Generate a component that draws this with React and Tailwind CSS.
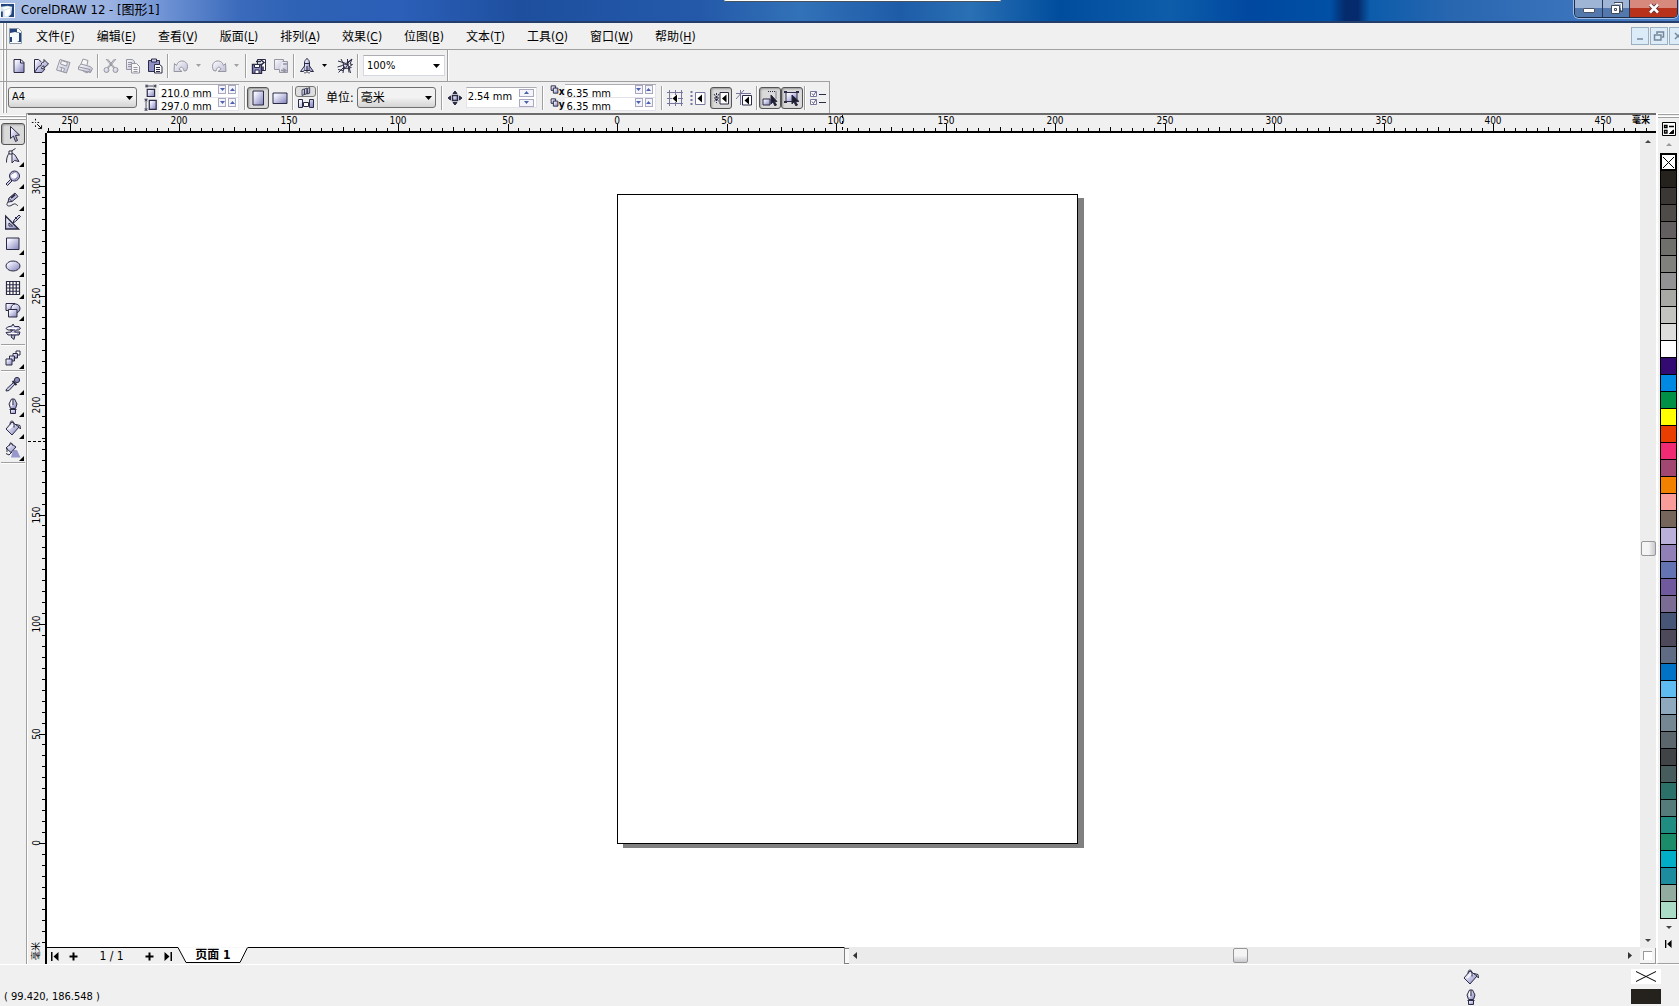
import React from "react";

const INK = "#2b2b45";
const LAV = "url(#lav)";

const MENUS = [
  ["文件", "F"], ["编辑", "E"], ["查看", "V"], ["版面", "L"], ["排列", "A"], ["效果", "C"],
  ["位图", "B"], ["文本", "T"], ["工具", "O"], ["窗口", "W"], ["帮助", "H"],
];

const PALETTE = [
  "#25221e", "#3a3734", "#4e4b48", "#635e5f", "#6f6f6c", "#80807d", "#929294", "#a8a8a5",
  "#c3c3c0", "#dddddb", "#ffffff", "#330a72", "#0089e2", "#009147", "#ffff00", "#ea3d00",
  "#f02b74", "#a14772", "#f28100", "#f99c9a", "#75655b", "#bbb0d9", "#9180b8", "#6474b3",
  "#71599d", "#7b6c93", "#475577", "#4d485a", "#5f6c83", "#0073c6", "#5fbcf1", "#8faabf",
  "#748793", "#5c666d", "#414446", "#465c5d", "#2b7169", "#567b7b", "#1f8d81", "#1b8c69",
  "#00aec7", "#1d8c9e", "#92ac9f", "#abdcc8",
];

/* ---------- icons, all on a 16 x 16 grid ---------- */
const SHAPES = {
  newDoc: <path d="M3 1.500h7l3 3v10H3zM9.500 1.500v3.500h3.500" fill={LAV} />,
  open: (
    <>
      <path d="M1.500 14.500v-13h4l3 2.500" fill={LAV} />
      <path d="M1.500 14.500l4-6 2.500-1c0-2 1-3.500 3-3.500V1.500l4.500 4.500-4.500 4V8c-2 0-2.500 1-2.500 2.500L12 11l-3 3.500z" fill={LAV} />
    </>
  ),
  save: (
    <>
      <path d="M5 1.500l10 3-3.500 10.500-10-3z" fill={LAV} />
      <path d="M6.500 2.500l6 2-1 3.500-6-2zM4.500 9l5 1.500-1 3.500M7 10l-1 3" fill="#fff" />
    </>
  ),
  print: (
    <>
      <path d="M4 6l2-5 5 1.500L10 7" fill="#fff" />
      <path d="M1.500 9L4 6l9 2.500 2.500 2-2 4-12-3z" fill={LAV} />
      <path d="M2 9l11 2.500M13 11.500v3M6 13l4 2 2-2" />
    </>
  ),
  cut: (
    <>
      <path d="M3 1l8 9.500M13 1L5 10.500M4.500 1l7.500 9M11.500 1L4 10" />
      <circle cx="3.500" cy="12" r="2.500" fill={LAV} />
      <circle cx="12.500" cy="12" r="2.500" fill={LAV} />
    </>
  ),
  copy: (
    <>
      <path d="M1.500 1.500h6l2 2v8h-8z" fill={LAV} />
      <path d="M6.500 5.500h5l3 3v6.500h-8zM8.500 9.500h4M8.500 11.500h4M8.500 13.500h4M3 4.500h4M3 6.500h3M3 8.500h3" fill="#fff" />
    </>
  ),
  paste: (
    <>
      <path d="M1.500 2.500h11v11h-11z" fill="#8f8fc6" />
      <path d="M4.500 1h5v3h-5z" fill="#ccccee" />
      <path d="M7.500 6.500h5l2.500 2V15H7.500zM9 9.500h4M9 11.500h4M9 13.500h4" fill="#fff" />
    </>
  ),
  undo: <path d="M1.500 5.500L1 13.500h8l-3-2.500c1-2.500 4-3 5 2l2.500-.5c3-6-1-10-5-9.500-3 .3-4 2-5 4.500z" fill={LAV} />,
  redo: <path d="M14.500 5.500l.5 8H7l3-2.500c-1-2.500-4-3-5 2l-2.500-.5c-3-6 1-10 5-9.500 3 .3 4 2 5 4.500z" fill={LAV} />,
  importIcon: (
    <>
      <path d="M6.500 1.500h8v11h-8z" fill="#fff" />
      <path d="M1.500 6.500h9v9h-9z" fill="#8f8fc6" strokeWidth="1.400" />
      <path d="M3.500 6.500h5v3h-5zM4 12h4v3.500H4z" fill="#fff" />
      <path d="M5 3.500h5M10 2l3 2.500-3 2.500M12 8.500v4" strokeWidth="1.600" />
    </>
  ),
  exportIcon: (
    <>
      <path d="M1.500 1.500h9v10h-9z" fill={LAV} />
      <path d="M9.500 3.500h5v11h-8v-3" fill={LAV} />
      <path d="M8 12.500h4M10 10.500l3 2-3 2M10 6h4" strokeWidth="1.500" />
    </>
  ),
  rocket: (
    <>
      <path d="M5.500 12.500V5c0-2 1-3.500 2.500-4.500C9.500 1.500 10.500 3 10.500 5v7.500z" fill={LAV} />
      <path d="M5.500 8L1.500 13.500h3l1-1.500M10.500 8l4 5.500h-3l-1-1.500M8 8v7M6 14v1.500M10 14v1.500" fill={LAV} />
      <path d="M6 5.500h4" />
    </>
  ),
  corel: (
    <>
      <path d="M1 3l5 1.500 3 1L15 1l-2 5 2.500.5L12 9l1.500 6M1.500 14.500L14 2M.5 9l5-1.500 4 3 5-1M4 1l3 6-1 8M1 11.500l5 1 5-7 1 9M10.500 1v4" />
      <path d="M6 6l5 .5L8 11z" fill={LAV} />
    </>
  ),
  pageW: (
    <>
      <path d="M4 6.500h9v9H4z" fill={LAV} strokeWidth="1.500" />
      <path d="M2 2.500h13M2.500 .5v4M14.500 .5v4M5 1L3 2.500 5 4M12 1l2 1.500L12 4" />
    </>
  ),
  pageH: (
    <>
      <path d="M6.500 3h8.500v11H6.500z" fill={LAV} strokeWidth="1.500" />
      <path d="M2.500 1v14M.5 1.500h4M.5 15h4M1 4l1.500-2L4 4M1 12.500l1.500 2 1.500-2" />
    </>
  ),
  portrait: <path d="M3 1h10.500v14H3z" fill={LAV} />,
  landscape: <path d="M1 3h14v10.500H1z" fill={LAV} />,
  facing: <path d="M1 5l4-1.500v10L1 15zM5.500 3.500l4-1.500v10l-4 1.500zM10.500 2.500l4-1.500v10l-4 1.500z" fill={LAV} strokeWidth="1.500" />,
  pages: (
    <>
      <path d="M.5 4.500h4v8h-4zM11.500 4.500h4v8h-4z" fill={LAV} />
      <path d="M5.500 7.500h5v4h-5z" fill="#fff" />
    </>
  ),
  nudge: (
    <>
      <path d="M5.500 5.500h5v5h-5z" fill={LAV} strokeWidth="1.500" />
      <path d="M8 1L6 3.500h4zM8 15l-2-2.500h4zM1 8l2.500-2v4zM15 8l-2.500-2v4z" fill={INK} />
    </>
  ),
  dup: (
    <>
      <path d="M2 1.500h8v8H2z" fill={LAV} strokeWidth="1.700" />
      <path d="M6 5.500h8v9H6z" fill={LAV} strokeWidth="1.700" />
    </>
  ),
  snapGrid: (
    <>
      <path d="M2.500 0v16M8.500 0v16M14.500 0v16M0 2.500h16M0 8.500h16M0 13.500h16" stroke="#77779d" />
      <path d="M5 5h6v7H5z" fill="#fff" stroke="none" />
      <path d="M10 4.500v8L5.500 8.500z" fill="#000" stroke="none" />
    </>
  ),
  snapGuide: (
    <>
      <path d="M1.500 1v14" strokeDasharray="2 2" strokeWidth="2" stroke="#77779d" />
      <path d="M5.500 2.500h9.500v12H5.500z" fill="#fff" stroke="#77779d" />
      <path d="M12 4.500v8L7.500 8.500z" fill="#000" stroke="none" />
    </>
  ),
  snapObj: (
    <>
      <path d="M1 4l5 8M6 4l-5 8M1 8h5M3.500 3v10" strokeDasharray="2 1" />
      <path d="M7 2.500h8.500v11.500H7z" fill="#fff" />
      <path d="M13.500 4.500v8L9 8.500z" fill="#000" stroke="none" />
    </>
  ),
  dynGuide: (
    <>
      <path d="M0 3.500h15M4.500 0v15M0 9L8 0" stroke="#77779d" />
      <path d="M6.500 5.500h9V15h-9z" fill="#fff" />
      <path d="M13 6.500v8L8.500 10.500z" fill="#000" stroke="none" />
    </>
  ),
  drawOrder: (
    <>
      <path d="M6 1.500h8v8" strokeDasharray="1 1" />
      <path d="M1 9h7v6H1z" fill={LAV} />
      <path d="M9 5v9l2-2 2 4 1.500-1-2-3.500H15z" fill="#1c1c2c" />
    </>
  ),
  treatFilled: (
    <>
      <path d="M2 2.500h11v9H2z" fill={LAV} />
      <path d="M0 2h3M12 2h3M0 12h3" strokeWidth="2" />
      <path d="M8 5v9l2-2 2 4 1.500-1-2-3.500H15z" fill="#1c1c2c" />
    </>
  ),
  options: (
    <>
      <path d="M.5 1.500h6v5h-6zM.5 9.500h6v5h-6z" fill="#fff" stroke="#77779d" />
      <path d="M2 3.500L3.500 5.500 6 1.500M2 11.500l1.500 2L6 9.500" stroke="#5a5a8a" />
      <path d="M9 4.500h7M9 12.500h7" />
    </>
  ),
  pick: <path d="M5.500.500v12l3-2.500 2 5.500 2-1-2-5 4-.5z" fill={LAV} />,
  shape: (
    <>
      <path d="M1.500 14.500c0-7 2-10 9-14" />
      <path d="M7 5v10l2.500-2.500 4.500 1L10 7z" fill={LAV} />
      <path d="M4 3h3v3H4z" fill="#fff" />
    </>
  ),
  zoom: (
    <>
      <path d="M5.500 9.500l1.500 1.500-4.500 4.500L1 14z" fill={LAV} />
      <circle cx="9.500" cy="6" r="5" fill="#b4b4de" />
      <circle cx="9" cy="5.500" r="3" fill="#f8f8ff" stroke="none" />
      <path d="M6.500 4.500a3.500 3.500 0 0 1 3-2M12.500 7a3.500 3.500 0 0 1-3 2.500" stroke="#77779d" />
    </>
  ),
  freehand: (
    <>
      <path d="M3 10l1-4 6-5 3 3.500-6 5z" fill={LAV} />
      <path d="M4 6.500l3 3M3 10c-3 4 1 5 4 3s4-1 6 1" />
      <path d="M6 6l4-3.500" strokeWidth="2" />
    </>
  ),
  drafting: (
    <>
      <path d="M.5 2v13h13z" fill={LAV} strokeWidth="1.400" />
      <path d="M4 9v3h3.500z" fill="#fff" />
      <path d="M8 9l1-3 5-5 1.500 1.500-5 5z" fill={LAV} />
      <path d="M10 3l3 3" />
    </>
  ),
  rect: <path d="M1.500 2h12.500v11.500H1.500z" fill={LAV} />,
  ellipse: <ellipse cx="8" cy="8" rx="7" ry="5" fill={LAV} />,
  grid: <path d="M1.500 1.500h13v13h-13zM4.750 1.500v13M8 1.500v13M11.250 1.500v13M1.500 4.750h13M1.500 8h13M1.500 11.250h13" fill="#fff" strokeWidth="1.200" />,
  shapes: (
    <>
      <path d="M1 1.500h9v7H1z" fill={LAV} />
      <circle cx="10.500" cy="6.500" r="4.500" fill={LAV} />
      <path d="M3.500 7.500h8.500v7.500H3.500z" fill={LAV} />
    </>
  ),
  text: (
    <>
      <path d="M8 0l1.500 2.500h4.500l1.500 2-2 1.500h-2l-2 2H15l-1 3h-4L9 15.500 6 13l1-2H3L1 8.500l5-.5 1.500-2H3L1 4.500 2.500 3 7 2z" fill={LAV} />
      <path d="M3 4.500h9M4 9.500h8" stroke="#fff" />
      <path d="M5 6h5M6 11h4" />
    </>
  ),
  blend: (
    <>
      <path d="M11 1h4v4h-4z" fill="#fff" />
      <path d="M8 3.500h4.500V8H8z" fill={LAV} />
      <path d="M4.500 6h5v5h-5z" fill={LAV} />
      <path d="M1 9h6v6H1z" fill={LAV} />
    </>
  ),
  dropper: (
    <>
      <path d="M8.500 6.500l1.500 1.500-6 6.500-3 .5.500-2z" fill={LAV} />
      <path d="M7.500 5l4 4" strokeWidth="2" />
      <circle cx="12" cy="4" r="2.600" fill="#8c8cbc" />
    </>
  ),
  pen: (
    <>
      <path d="M5.500 10.500L4 6l2.500-5h3L12 6l-1.500 4.500z" fill={LAV} />
      <path d="M4.500 11.500h7M5.500 12v3.500h5V12" fill={LAV} />
      <path d="M6.500 3v5" stroke="#fff" />
      <path d="M8 1v6" />
    </>
  ),
  fill: (
    <>
      <path d="M1 9l6-7 7 5-7 8z" fill={LAV} />
      <path d="M5 4.500c0-5 4-4.500 4 0v3M11 4.500l4 1 .5 3.500-2-2" fill="none" />
      <path d="M4 9l4-4" stroke="#fff" strokeWidth="1.500" />
    </>
  ),
  interactiveFill: (
    <>
      <path d="M8 8h4l3.500 7.500H6z" fill="#9898cc" stroke="none" />
      <path d="M1 6l5-4.500L11 5l-5 5.500z" fill={LAV} />
      <path d="M4.500 3.500c0-4 3-3 3 0M1 11.500l3 1.500 3-3M2 6v4" />
    </>
  ),
  navigator: (
    <path d="M1 5.500h2M5.500 1v2M5.500 5v1M8 5.500h2M5.500 9v2M7.500 7.500l5 5M13 9v4H9" stroke="#000" strokeWidth="1.200" />
  ),
};

function Icon({ name, className = "size-4", muted = false }) {
  return (
    <svg viewBox="0 0 16 16" aria-hidden="true" fill="none" stroke={INK} className={`shrink-0 ${className} ${muted ? "opacity-45" : ""}`}>
      {SHAPES[name]}
    </svg>
  );
}

function Arrow({ dir = "down", color = "#000", className = "h-[5px] w-[9px]" }) {
  const d = { down: "M0 0h10L5 6z", up: "M0 6h10L5 0z", left: "M10 0v6L0 3z", right: "M0 0v6L10 3z" }[dir];
  return (
    <svg viewBox="0 0 10 6" preserveAspectRatio="none" aria-hidden="true" className={`shrink-0 ${className}`}>
      <path d={d} fill={color} />
    </svg>
  );
}

const Grip = () => (
  <div className="mr-px flex shrink-0 gap-px self-stretch pl-[2px]">
    <span className="w-[2px] border-r border-[#a0a0a0] bg-white" />
    <span className="w-[2px] border-r border-[#a0a0a0] bg-white" />
  </div>
);

const Sep = () => <span className="mx-px h-6 w-[2px] shrink-0 self-center border-l border-[#a0a0a0] bg-white" />;

function ToolButton({ name, label, muted, pressed }) {
  return (
    <button
      aria-label={label}
      aria-pressed={pressed ? true : undefined}
      className={`flex h-[22px] w-[22px] shrink-0 items-center justify-center rounded-[3px] ${pressed ? "border border-[#555] bg-[#dadada] shadow-[inset_1px_1px_2px_#999]" : ""}`}
    >
      <Icon name={name} muted={muted} />
    </button>
  );
}

const DropArrow = ({ label, muted }) => (
  <button aria-label={label} className="flex h-5 w-3 shrink-0 items-center justify-center">
    <Arrow color={muted ? "#a0a0a0" : "#000"} className="h-[3px] w-[5px]" />
  </button>
);

function Spin({ dir, label, className }) {
  return (
    <button aria-label={label} className={`flex shrink-0 items-center justify-center border border-[#a8a8c0] bg-[#f4f4fa] ${className}`}>
      <Arrow dir={dir} color="#4a62ae" className="h-[3px] w-[5px]" />
    </button>
  );
}

function DoubleField({ rows, width }) {
  return (
    <div className={`flex h-[27px] shrink-0 flex-col border-t border-[#abadb3] bg-white ${width}`}>
      {rows.map(([label, value]) => (
        <div key={label} className="flex h-[13px] items-start gap-[2px] border-r border-b border-[#e2e3ea] pr-[2px] pl-[2px]">
          <input aria-label={label} defaultValue={value} className="h-[14px] w-0 min-w-0 flex-1 bg-transparent pt-[2px] text-[11px] leading-3 outline-none" />
          <Spin dir="down" label={`${label} -`} className="h-[9px] w-2" />
          <Spin dir="up" label={`${label} +`} className="h-[9px] w-2" />
        </div>
      ))}
    </div>
  );
}

/* ---------- rulers ---------- */
const SCALE = 2.19;
const ORIGIN_X = 570;
const ORIGIN_Y = 710;
const range = (from, to) => Array.from({ length: to - from + 1 }, (_, i) => from + i);
const tick = (i) => (i % 10 === 0 ? 7 : i % 5 === 0 ? 4 : 3);

function HorizontalRuler() {
  return (
    <div className="flex h-[18px] min-w-0 flex-1 items-start overflow-hidden border-b-2 border-black">
      <svg className="h-4 w-0 min-w-0 flex-1 overflow-hidden text-[10px]" role="img" aria-label="水平标尺">
        {range(-52, 100).map((i) => {
          const x = Math.round(ORIGIN_X + i * 5 * SCALE);
          return (
            <g key={i}>
              <rect x={x} y={16 - tick(i)} width="1" height={tick(i)} />
              {i % 10 === 0 && i < 100 && (
                <text x={x} y="9" textAnchor="middle">{Math.abs(i * 5)}</text>
              )}
            </g>
          );
        })}
        <path d="M795.500 0v17" stroke="#000" strokeDasharray="3 3" />
      </svg>
      <span className="-ml-6 w-6 text-[9px] leading-[11px] font-bold">毫米</span>
    </div>
  );
}

function VerticalRuler() {
  return (
    <div className="relative flex w-[19px] shrink-0 border-r-2 border-black">
      <svg className="h-full w-[17px] overflow-hidden text-[10px]" role="img" aria-label="垂直标尺">
        {range(-9, 64).map((i) => {
          const y = Math.round(ORIGIN_Y - i * 5 * SCALE);
          return (
            <g key={i}>
              <rect x={17 - (i % 10 === 0 ? 6 : 3)} y={y} width={i % 10 === 0 ? 6 : 3} height="1" />
              {i % 10 === 0 && i >= 0 && (
                <text transform={`translate(12 ${y}) rotate(-90)`} textAnchor="middle">{i * 5}</text>
              )}
            </g>
          );
        })}
        <path d="M0 308.500h17" stroke="#000" strokeDasharray="3 2" />
      </svg>
      <span className="absolute bottom-1 left-[3px] -rotate-180 text-[9px] leading-[11px] [writing-mode:vertical-rl] [text-orientation:sideways]">毫米</span>
    </div>
  );
}

const TOOLS = [
  ["pick", "挑选工具"], ["shape", "形状工具", 1], ["zoom", "缩放工具", 1], ["freehand", "手绘工具", 1],
  ["drafting", "智能绘图工具"], ["rect", "矩形工具", 1], ["ellipse", "椭圆工具", 1], ["grid", "图纸工具", 1],
  ["shapes", "基本形状", 1], ["text", "文本工具"], null, ["blend", "交互式工具", 1], null,
  ["dropper", "滴管工具", 1], ["pen", "轮廓工具", 1], ["fill", "填充工具", 1], ["interactiveFill", "交互式填充", 1], null,
];

function AppLogo({ className }) {
  return (
    <svg viewBox="0 0 16 16" aria-hidden="true" className={className}>
      <path d="M0 0h16v16H0z" fill="#fff" />
      <path d="M1 1h14v14H1z" fill="#24447e" />
      <path d="M1 4l7-1 5 1-1 8-3 3H3V9H1z" fill="#d5e4ea" />
      <path d="M2 5l6-1 4 .5L5 7zM5 8l6-2-.5 6-2.500 2H5z" fill="#fff" />
    </svg>
  );
}

function TitleBar() {
  return (
    <header className="relative flex h-[23px] shrink-0 items-start justify-between border-b-2 border-[#243e6c] bg-[linear-gradient(90deg,#a9bfe5_0px,#9ab2e2_110px,#6a8fd2_170px,#3a6abb_240px,#2e62b5_300px,#2b5fb8_400px,#1e4f9f_520px,#2459a9_700px,#3272b8_800px,#1e5ca8_900px,#2a70b4_970px,#004d9d_1060px,#0d5daa_1170px,#0048a0_1250px,#0050a5_1330px,#052b6c_1345px,#052b6c_1358px,#0b5cab_1370px,#2866b0_1450px,#4a7fc6_1679px)]">
      <div className="flex h-[20px] items-center gap-[6px]">
        <AppLogo className="size-[15px]" />
        <h1 className="text-[13px] leading-5">CorelDRAW 12 - [图形1]</h1>
      </div>
      <div className="absolute top-0 left-1/2 h-[2px] w-[277px] translate-x-[-116px] rounded-b-sm border-b border-[#46545f] bg-white" />
      <div className="mr-px flex h-[18px] overflow-hidden rounded-b-[5px] border border-t-0 border-[#1e2c49] shadow-[0_0_0_1px_#9dbbe2]">
        <button aria-label="最小化" className="flex w-7 items-end justify-center border-r border-[#24365a] bg-linear-to-b from-[#9fb5d5] from-50% to-[#5378ad] to-50% pb-1">
          <span className="h-[5px] w-3 rounded-[1px] border border-[#4e5464] bg-white" />
        </button>
        <button aria-label="还原" className="flex w-[27px] items-center justify-center border-r border-[#24365a] bg-linear-to-b from-[#9fb5d5] from-50% to-[#5378ad] to-50%">
          <svg viewBox="0 0 13 13" className="size-[13px]" fill="none">
            <path d="M4 1h8v8H10" stroke="#434a5b" strokeWidth="2" />
            <path d="M4.500 1.500h7v7" stroke="#fff" />
            <path d="M1.500 3.500h8v8h-8z" stroke="#434a5b" fill="#fff" />
            <path d="M4.500 6.500h2v2h-2z" stroke="#434a5b" />
          </svg>
        </button>
        <button aria-label="关闭" className="flex w-[47px] items-center justify-center bg-linear-to-b from-[#d6897c] from-45% to-[#b8311b] to-50%">
          <svg viewBox="0 0 12 11" className="h-[11px] w-3">
            <path d="M2.500 2l7 7M9.500 2l-7 7" stroke="#5a3440" strokeWidth="4.500" />
            <path d="M2 1.500l8 8M10 1.500l-8 8" stroke="#fff" strokeWidth="2.500" />
          </svg>
        </button>
      </div>
    </header>
  );
}

function ChildButton({ label, d }) {
  return (
    <button aria-label={label} className="flex h-[18px] w-[18px] shrink-0 items-center justify-center border border-[#9caec2] bg-[#dcebf8]">
      <svg viewBox="0 0 12 12" className="size-3" fill="none" stroke="#75879a" strokeWidth="1.500"><path d={d} /></svg>
    </button>
  );
}

function MenuBar() {
  return (
    <nav className="flex h-[27px] shrink-0 items-center overflow-hidden border-b border-[#a0a0a0]">
      <Grip />
      <svg viewBox="0 0 13 16" aria-hidden="true" className="ml-px h-4 w-[13px] shrink-0">
        <path d="M.5.500h9l3 3v12H.5z" fill="#fff" stroke="#8d98a8" />
        <path d="M1 1h7v3l4 1v9H1z" fill="#24447e" />
        <path d="M1 5l5-1 4 1v8l-4 2H3V9H1z" fill="#f6fafc" />
      </svg>
      <div className="ml-[14px] flex gap-[22px] pt-[2px]">
        {MENUS.map(([t, k]) => (
          <button key={k} className="text-[12px] leading-5 whitespace-nowrap">
            {t}(<u className="underline-offset-2">{k}</u>)
          </button>
        ))}
      </div>
      <div className="-mr-2 ml-auto flex gap-px">
        <ChildButton label="最小化文档" d="M3 9h6" />
        <ChildButton label="还原文档" d="M4 4V2h6.500v5H9M1.500 5h6.500v5H1.500z" />
        <ChildButton label="关闭文档" d="M3 3l6 6M9 3l-6 6" />
      </div>
    </nav>
  );
}

function Toolbar() {
  return (
    <div className="flex h-[31px] shrink-0 items-center">
      <Grip />
      <ToolButton name="newDoc" label="新建" />
      <ToolButton name="open" label="打开" />
      <ToolButton name="save" label="保存" muted />
      <ToolButton name="print" label="打印" muted />
      <Sep />
      <ToolButton name="cut" label="剪切" muted />
      <ToolButton name="copy" label="复制" muted />
      <ToolButton name="paste" label="粘贴" />
      <Sep />
      <ToolButton name="undo" label="撤消" muted />
      <DropArrow label="撤消列表" muted />
      <span className="w-1" />
      <ToolButton name="redo" label="重做" muted />
      <DropArrow label="重做列表" muted />
      <span className="w-[2px]" />
      <Sep />
      <ToolButton name="importIcon" label="导入" />
      <ToolButton name="exportIcon" label="导出" muted />
      <Sep />
      <ToolButton name="rocket" label="应用程序启动器" />
      <DropArrow label="启动器列表" />
      <span className="w-1" />
      <ToolButton name="corel" label="Corel" />
      <Sep />
      <div className="ml-[3px] flex h-[21px] w-[82px] items-center border border-[#d5d8e2] border-t-[#abadb3] bg-white pr-1">
        <input aria-label="缩放级别" defaultValue="100%" className="w-0 min-w-0 flex-1 pt-[2px] pl-[3px] text-[11px] outline-none" />
        <Arrow className="h-1 w-[7px]" />
      </div>
      <span className="ml-[2px] h-full w-[2px] border-l border-[#a0a0a0] bg-white" />
    </div>
  );
}

function Select({ id, label, value, width, text }) {
  return (
    <div className={`relative flex h-[21px] shrink-0 items-center ${width}`}>
      <select id={id} aria-label={label} className={`h-full w-full appearance-none rounded-[3px] border border-[#707070] bg-linear-to-b from-[#f2f2f2] from-50% to-[#d4d4d4] pl-[3px] ${text}`}>
        <option>{value}</option>
      </select>
      <Arrow className="pointer-events-none absolute right-1 h-1 w-[7px]" />
    </div>
  );
}

function PropertyBar() {
  return (
    <div className="flex h-8 w-fit shrink-0 items-center border-t border-r border-[#a0a0a0]">
      <Grip />
      <Select id="paper" label="纸张类型" value="A4" width="w-[129px]" text="text-[11px]" />
      <div className="mr-[2px] ml-[7px] flex flex-col gap-px">
        <Icon name="pageW" className="size-[13px]" />
        <Icon name="pageH" className="size-[13px]" />
      </div>
      <DoubleField rows={[["宽度", "210.0 mm"], ["高度", "297.0 mm"]]} width="w-20" />
      <span className="w-1" />
      <Sep />
      <ToolButton name="portrait" label="纵向" pressed />
      <ToolButton name="landscape" label="横向" />
      <Sep />
      <div className="flex w-[21px] shrink-0 flex-col items-center">
        <button aria-label="全部页面" className="flex h-[11px] w-[21px] items-center justify-center rounded-[3px] border border-[#777] bg-[#dedede]">
          <Icon name="facing" className="h-[9px] w-[10px]" />
        </button>
        <button aria-label="当前页面" className="flex h-3 w-[21px] items-center justify-center">
          <Icon name="pages" className="size-4" />
        </button>
      </div>
      <Sep />
      <label className="mr-[3px] ml-[6px] shrink-0 text-[12px] whitespace-nowrap" htmlFor="unit">单位:</label>
      <Select id="unit" value="毫米" width="w-[79px]" text="text-[12px]" />
      <span className="w-1" />
      <Sep />
      <ToolButton name="nudge" label="微调" />
      <div className="flex h-[21px] w-[71px] shrink-0 items-center border border-[#e2e3ea] border-t-[#abadb3] bg-white pr-[2px]">
        <input aria-label="微调偏移" defaultValue="2.54 mm" className="w-0 min-w-0 flex-1 pl-px text-[11px] outline-none" />
        <div className="flex flex-col gap-[2px]">
          <Spin dir="up" label="增加" className="h-2 w-[15px]" />
          <Spin dir="down" label="减少" className="h-2 w-[15px]" />
        </div>
      </div>
      <span className="w-1" />
      <Sep />
      <div className="ml-[5px] flex shrink-0 flex-col text-[10px] leading-3 font-bold">
        <span className="flex h-[13px] items-end"><Icon name="dup" className="mb-1 size-[9px]" />x</span>
        <span className="flex h-[13px] items-end"><Icon name="dup" className="mb-1 size-[9px]" />y</span>
      </div>
      <DoubleField rows={[["水平再制", "6.35 mm"], ["垂直再制", "6.35 mm"]]} width="w-[91px]" />
      <span className="w-1" />
      <Sep />
      <div className="flex gap-px">
        <ToolButton name="snapGrid" label="对齐网格" />
        <ToolButton name="snapGuide" label="对齐辅助线" />
        <ToolButton name="snapObj" label="对齐对象" pressed />
        <ToolButton name="dynGuide" label="动态导线" />
      </div>
      <Sep />
      <ToolButton name="drawOrder" label="绘制时移动" pressed />
      <ToolButton name="treatFilled" label="视为已填充" pressed />
      <Sep />
      <ToolButton name="options" label="选项" />
    </div>
  );
}

function Toolbox() {
  return (
    <aside className="flex w-[27px] shrink-0 flex-col items-center border-r border-[#a0a0a0] pt-[2px]">
      <span className="h-[2px] w-full shrink-0 border-b border-[#a0a0a0] bg-white" />
      <span className="mt-px mb-[3px] h-[2px] w-full shrink-0 border-b border-[#a0a0a0] bg-white" />
      {TOOLS.map((t, i) =>
        t === null ? (
          <span key={i} className="my-px h-[2px] w-6 shrink-0 border-t border-[#a0a0a0] bg-white" />
        ) : (
          <button
            key={t[0]}
            aria-label={t[1]}
            className={`relative flex h-[22px] w-6 shrink-0 items-center justify-center rounded-[3px] ${i === 0 ? "border border-[#555] bg-[#dadada] shadow-[inset_1px_1px_2px_#999]" : ""}`}
          >
            <Icon name={t[0]} />
            {t[2] && <span className="absolute right-px bottom-0 size-[5px] bg-black [clip-path:polygon(100%_0,100%_100%,0_100%)]" />}
          </button>
        )
      )}
    </aside>
  );
}

function PageStrip() {
  return (
    <div className="flex h-[17px] shrink-0">
      <div className="flex min-w-0 basis-1/2 items-stretch overflow-hidden">
        <div className="flex w-[131px] shrink-0 items-center justify-between border-t border-black pr-[6px] pl-1 text-[12px] leading-4">
          <button aria-label="第一页" className="flex"><svg viewBox="0 0 8 9" className="h-[9px] w-2"><path d="M0 0h1.500v9H0zM7.500 0v9L2.500 4.500z" /></svg></button>
          <button aria-label="前面添加页" className="flex"><svg viewBox="0 0 9 9" className="size-[9px]"><path d="M3.500 .5h2v3H8.500v2H5.500v3h-2v-3H.5v-2h3z" /></svg></button>
          <span className="px-3">1 / 1</span>
          <button aria-label="后面添加页" className="flex"><svg viewBox="0 0 9 9" className="size-[9px]"><path d="M3.500 .5h2v3H8.500v2H5.500v3h-2v-3H.5v-2h3z" /></svg></button>
          <button aria-label="最后一页" className="flex"><svg viewBox="0 0 8 9" className="h-[9px] w-2"><path d="M6.500 0H8v9H6.500zM.5 0v9l5-4.500z" /></svg></button>
        </div>
        <button className="relative h-4 w-[70px] shrink-0 text-[12px] leading-4 font-bold">
          <svg viewBox="0 0 70 16" aria-hidden="true" className="absolute inset-0 h-4 w-[70px]">
            <path d="M0 .5l8 15h54L69.500.500" fill="#fff" stroke="#000" />
          </svg>
          <span className="relative">页面 1</span>
        </button>
        <div className="min-w-0 flex-1 border-t border-black" />
      </div>
      <div className="flex min-w-0 flex-1 items-center border-l border-[#808080] bg-[#ebebeb] pr-1">
        <span className="h-4 w-[4px] shrink-0 border-y border-[#808080] bg-[#f8f8f8]" />
        <button aria-label="向左滚动" className="flex w-3 justify-center"><Arrow dir="left" color="#333" className="h-[7px] w-1" /></button>
        <div className="flex flex-1 justify-center pr-1">
          <span className="h-[15px] w-[15px] rounded-[2px] border border-[#979797] bg-linear-to-b from-[#f4f4f4] from-50% to-[#c9c9cf]" />
        </div>
        <button aria-label="向右滚动" className="flex w-3 justify-center"><Arrow dir="right" color="#333" className="h-[7px] w-1" /></button>
      </div>
    </div>
  );
}

function Workspace() {
  return (
    <main className="flex min-w-0 flex-1 flex-col border-t-2 border-l border-[#6b6b6b] border-l-white">
      <div className="flex h-[18px] shrink-0">
        <button aria-label="标尺原点" className="flex w-[19px] shrink-0 items-center justify-center"><Icon name="navigator" className="size-[13px]" /></button>
        <HorizontalRuler />
      </div>
      <div className="flex min-h-0 flex-1">
        <VerticalRuler />
        <div className="flex min-w-0 flex-1 flex-col">
          <div className="relative min-h-0 flex-1 overflow-hidden bg-white">
            <div className="absolute top-[61px] left-[570px] h-[650px] w-[461px] border border-black bg-white shadow-[6px_4px_0_0_#808080] [clip-path:polygon(0_0,100%_0,100%_4px,calc(100%+6px)_4px,calc(100%+6px)_calc(100%+4px),6px_calc(100%+4px),6px_100%,0_100%)]" />
          </div>
          <PageStrip />
        </div>
        <div className="flex w-4 shrink-0 flex-col items-center bg-[#ededed]">
          <button aria-label="向上滚动" className="flex h-4 w-4 items-center justify-center"><Arrow dir="up" color="#444" className="h-[3px] w-[6px]" /></button>
          <div className="flex flex-1 flex-col items-center">
            <span className="grow-[26]" />
            <span className="size-[15px] shrink-0 rounded-[2px] border border-[#979797] bg-linear-to-r from-[#f4f4f4] from-50% to-[#c9c9cf]" />
            <span className="grow-[25]" />
          </div>
          <button aria-label="向下滚动" className="flex h-4 w-4 items-center justify-center"><Arrow color="#444" className="h-[3px] w-[6px]" /></button>
          <button aria-label="导航器" className="flex size-4 items-center justify-center border-r border-b border-[#999] bg-[#f4f4f4]">
            <span className="size-[9px] border-t border-l border-[#999] bg-white" />
          </button>
        </div>
      </div>
    </main>
  );
}

function ColorPalette() {
  return (
    <aside className="flex w-[23px] shrink-0 flex-col items-center border-b border-l-2 border-[#a0a0a0] border-l-white">
      <span className="h-[2px] w-full shrink-0 border-b border-[#a0a0a0] bg-white" />
      <span className="mt-px h-[2px] w-full shrink-0 border-b border-[#a0a0a0] bg-white" />
      <button aria-label="调色板菜单" className="mt-1 flex shrink-0">
        <svg viewBox="0 0 14 14" className="size-[14px]" fill="none" stroke="#000">
          <path d="M.5.500h13v13H.5z" fill="#fff" />
          <path d="M2.500 3.500h2.500v2h-2.500zM2.500 8.500h2.500v2.500h-2.500zM7 4.500h5" strokeWidth="1.300" />
          <path d="M7.500 11.500h4V8z" fill="#000" />
        </svg>
      </button>
      <button aria-label="向上滚动颜色" className="flex h-[17px] w-4 shrink-0 items-center justify-center"><Arrow dir="up" color="#999" className="h-[3px] w-[6px]" /></button>
      <button aria-label="无填充" className="flex h-[18px] w-[17px] shrink-0 items-center justify-center border-2 border-black bg-white">
        <svg viewBox="0 0 13 13" className="size-[13px]" stroke="#000"><path d="M1 1l11 11M12 1L1 12" /></svg>
      </button>
      {PALETTE.map((c) => (
        <button key={c} aria-label={c} className="h-[17px] w-[17px] shrink-0 border border-t-0 border-black" style={{ backgroundColor: c }} />
      ))}
      <button aria-label="向下滚动颜色" className="flex h-[17px] w-4 shrink-0 items-center justify-center"><Arrow color="#444" className="h-[3px] w-[6px]" /></button>
      <button aria-label="展开调色板" className="mt-1 flex"><svg viewBox="0 0 8 9" className="h-2 w-[7px]"><path d="M0 0h1.500v9H0zM7.500 0v9L2.500 4.500z" /></svg></button>
    </aside>
  );
}

function StatusBar() {
  return (
    <footer className="flex h-[42px] shrink-0 items-end border-t border-white pb-px">
      <p className="flex-1 pl-1 text-[11px] leading-4">( 99.420, 186.548 )</p>
      <div className="mb-px flex w-[216px] shrink-0 flex-col gap-[5px]">
        <div className="flex h-[15px] items-center gap-[152px]">
          <Icon name="fill" />
          <svg viewBox="0 0 30 15" className="h-[15px] w-[30px]" stroke="#000"><path d="M0 0h30v15H0z" fill="#fff" stroke="none" /><path d="M5 2.500l20 10M25 2.500l-20 10" /></svg>
        </div>
        <div className="flex h-[15px] items-center gap-[152px]">
          <Icon name="pen" />
          <span className="h-[15px] w-[30px] bg-[#25221e]" />
        </div>
      </div>
    </footer>
  );
}

export default function App() {
  return (
    <div className="flex h-screen flex-col overflow-hidden bg-[#f0f0f0] font-['DejaVu_Sans_Condensed','Noto_Sans_CJK_SC',sans-serif] text-black">
      <svg className="absolute size-0" aria-hidden="true">
        <defs>
          <linearGradient id="lav" x1="0" y1="0" x2="1" y2="1">
            <stop offset="0.200" stopColor="#f2f2ff" />
            <stop offset="1" stopColor="#8080ba" />
          </linearGradient>
        </defs>
      </svg>
      <TitleBar />
      <MenuBar />
      <Toolbar />
      <PropertyBar />
      <div className="flex min-h-0 flex-1">
        <Toolbox />
        <Workspace />
        <ColorPalette />
      </div>
      <StatusBar />
    </div>
  );
}
